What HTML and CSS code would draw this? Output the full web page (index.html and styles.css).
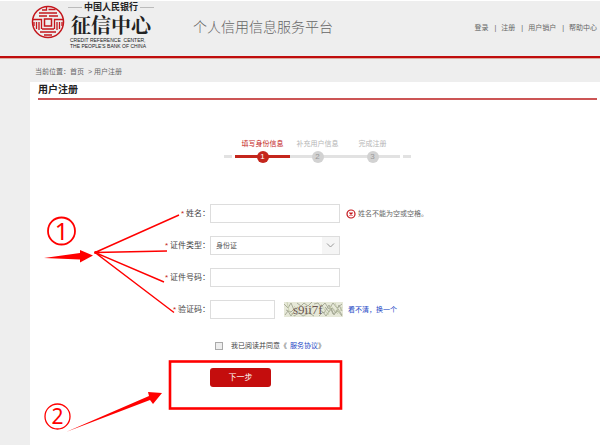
FILE: index.html
```html
<!DOCTYPE html>
<html lang="zh-CN">
<head>
    <meta charset="UTF-8">
    <meta name="viewport" content="width=device-width, initial-scale=1.0">
    <title>用户注册</title>
    <link rel="stylesheet" href="styles.css">
</head>
<body>
    <header class="header">
        <div class="logo">
            <svg class="logo-mark" viewBox="0 0 34 34" fill="none" stroke="#c4161c" stroke-width="1.3">
                <circle cx="17" cy="17" r="15.5" stroke-width="1.5"/>
                <rect x="13.500" y="14" width="7" height="7" stroke-width="1.5"/>
                <path d="M15.500 2v3H11M17.500 4.500h7M8 8h18M8 11h8M18 11h9"/>
                <path d="M2 14.500h8.500V24M8 17v8M5.500 17v7M3 17v4"/>
                <path d="M32 14.500h-8.500V24M26 17v8M28.500 17v7M31 17v4"/>
                <path d="M11 24h12M9 27h16M13 30h8"/>
            </svg>
            <div class="logo-text">
                <div class="logo-bank">中国人民银行</div>
                <div class="logo-name">征信中心</div>
                <div class="logo-en">CREDIT REFERENCE &nbsp;CENTER,<br>THE PEOPLE'S BANK OF CHINA</div>
            </div>
        </div>
        <div class="platform">个人信用信息服务平台</div>
        <nav class="top-nav">
            <a href="#">登录</a>
            <a href="#">注册</a>
            <a href="#">用户销户</a>
            <a href="#">帮助中心</a>
        </nav>
    </header>

    <div class="breadcrumb">当前位置：<a href="#">首页</a> &nbsp;&gt; 用户注册</div>

    <main class="panel">
        <h1 class="panel-title">用户注册</h1>

        <div class="steps">
            <span class="dash"></span>
            <ol class="step-list">
                <li class="step active">填写身份信息<span class="step-num">1</span></li>
                <li class="step">补充用户信息<span class="step-num">2</span></li>
                <li class="step">完成注册<span class="step-num">3</span></li>
            </ol>
            <span class="dash"></span>
        </div>

        <form class="form">
            <label class="label" for="name"><span class="required">*</span>姓名：</label>
            <div class="field">
                <input class="input" type="text" id="name">
                <span class="error">
                    <svg class="error-icon" viewBox="0 0 10 10" fill="none" stroke="#c4161c">
                        <circle cx="5" cy="5" r="4" stroke-width="1.2"/>
                        <path d="M3.500 3.500l3 3M6.500 3.500l-3 3" stroke-width="1.4"/>
                    </svg>
                    姓名不能为空或空格。
                </span>
            </div>

            <label class="label" for="idType"><span class="required">*</span>证件类型：</label>
            <div class="field">
                <div class="select-wrap">
                    <select class="input select" id="idType">
                        <option>身份证</option>
                    </select>
                    <svg class="select-arrow" viewBox="0 0 17 17" fill="none" stroke="#999">
                        <path d="M5 6.500l3.500 3.500L12 6.500"/>
                    </svg>
                </div>
            </div>

            <label class="label" for="idNumber"><span class="required">*</span>证件号码：</label>
            <div class="field">
                <input class="input" type="text" id="idNumber">
            </div>

            <label class="label" for="captcha"><span class="required">*</span>验证码：</label>
            <div class="field">
                <input class="input input-short" type="text" id="captcha">
                <svg class="captcha" viewBox="0 0 59 15">
                    <rect width="59" height="15" fill="#e6e8d8"/>
                    <g fill="none" stroke="#a3a692" stroke-width="0.9">
                        <path d="M0 2l4 4 3-5 3 7 4-3M1 13l3-4 3 5 4-6M13 1l4 3 3-3 4 3 4-4M10 14l5-3 4 3 6-3 5 3"/>
                        <path d="M30 2l4-1 3 4 4-4 4 6 4-6 4 5 5-4M35 14l4-4 3 4 5-8 3 7 4-6 4 6"/>
                        <path d="M41 5l4 5 3-4 4 5 3-8 3 6M2 8l5 2 3-3M36 8l4 3 5-8 4 9 5-3 4 5"/>
                    </g>
                    <g fill="none" stroke="#c4cbaa" stroke-width="0.8">
                        <path d="M3 0l2 9 5 5M20 4l5 8 4-9M37 2l7 11 3-9 7 8M51 1l4 10 3-6M10 4l7 8"/>
                    </g>
                    <text class="captcha-text" x="9" y="12">s9ii7f</text>
                </svg>
                <a class="link captcha-link" href="#">看不清，换一个</a>
            </div>

            <div class="agree">
                <input class="checkbox" type="checkbox" id="agree">
                <label for="agree">我已阅读并同意《</label>
                <a class="link" href="#">服务协议</a>》
            </div>

            <button class="next-btn" type="button">下一步</button>
        </form>
    </main>

    <!-- Guide marks drawn over the form -->
    <svg class="marks" viewBox="0 0 600 445" fill="none" stroke="#f00">
        <circle cx="61.500" cy="231" r="13.500" stroke-width="1.8"/>
        <circle cx="57.500" cy="416.500" r="12.500" stroke-width="1.3"/>
        <path d="M95 252.500L179 215M95 252.500l72-1.500M95 252.500l69 29.500M95 252.500l79 60" stroke-width="1.4"/>
        <path d="M44 258l36-5v-3l13 5.500-13 7v-3z" fill="#f00" stroke="none"/>
        <path d="M66 432l83-36-1-4 14 1-9 11-3-4z" fill="#f00" stroke="none"/>
        <rect x="170" y="361.500" width="171" height="47" stroke-width="2.600"/>
        <circle cx="95.500" cy="252.500" r="1.500" fill="#f00" stroke="none"/>
        <text class="mark-num" x="61.500" y="240">1</text>
        <text class="mark-num mark-num-small" x="57.500" y="424">2</text>
    </svg>
</body>
</html>
```

FILE: styles.css
```css
body {
    font-family: "Liberation Sans", "Noto Sans CJK SC", sans-serif;
    font-size: 7px;
    line-height: 10px;
    margin: 0;
    min-height: 100vh;
    display: flex;
    flex-direction: column;
    position: relative;
    background-color: #eee;
    color: #666;
}

a {
    color: inherit;
    text-decoration: none;
}

a:hover {
    text-decoration: underline;
}

.header {
    display: flex;
    align-items: flex-start;
    height: 55px;
    padding: 0 3px 0 31px;
    border-top: 1px solid #fff;
    border-bottom: 2px solid #c00d0d;
    box-shadow: 0 1px #dcaaa0;
}

.logo {
    display: flex;
    gap: 3px;
}

.logo-mark {
    width: 34px;
    height: 34px;
    margin-top: 4px;
}

.logo-text {
    width: 86px;
    padding-top: 1px;
    color: #222;
}

.logo-bank {
    display: flex;
    align-items: center;
    gap: 2px;
    font-size: 9px;
    font-weight: bold;
    line-height: 11px;
    white-space: nowrap;
}

.logo-bank::before,
.logo-bank::after {
    content: "";
    flex: 1;
    height: 1px;
    background-color: #bbb;
}

.logo-name {
    font-family: "Noto Serif CJK SC", "Noto Sans CJK SC", serif;
    font-size: 20px;
    font-weight: bold;
    line-height: 24px;
    text-align: center;
}

.logo-en {
    padding-left: 2px;
    font-size: 5px;
    line-height: 6px;
    white-space: nowrap;
}

.platform {
    margin: 16px 0 0 39px;
    font-size: 14px;
    font-weight: 300;
    line-height: 20px;
}

.top-nav {
    display: flex;
    margin: 22px 0 0 auto;
}

.top-nav a + a::before {
    content: "|";
    margin: 0 5px 0 6px;
}

.breadcrumb {
    padding: 9px 35px 5px;
}

.panel {
    flex: 1;
    margin-left: 30px;
    background-color: #fff;
}

.panel-title {
    margin: 0 3px 0 8px;
    font-size: 10px;
    line-height: 16px;
    color: #222;
    border-bottom: 2px solid #cc5555;
}

.steps {
    display: flex;
    align-items: flex-end;
    gap: 3px;
    margin: 39px 0 0 194px;
}

.dash {
    width: 8px;
    height: 3px;
    margin-bottom: 5px;
    background-color: #e2e2e2;
}

.step-list {
    display: flex;
    margin: 0;
    padding: 0;
    list-style: none;
}

.step {
    display: flex;
    flex-direction: column;
    align-items: center;
    gap: 2px;
    width: 55px;
    color: #b5b5b5;
    background: linear-gradient(#e2e2e2, #e2e2e2) 0 16px / 100% 3px no-repeat;
}

.step.active {
    color: #c4261c;
    background-image: linear-gradient(#c4261c, #c4261c);
}

.step-num {
    width: 12px;
    height: 12px;
    border-radius: 50%;
    background-color: #d2d2d2;
    color: #999;
    font-size: 8px;
    line-height: 12px;
    text-align: center;
}

.step.active .step-num {
    background-color: #c4261c;
    color: #fff;
}

.form {
    display: grid;
    grid-template-columns: 180px 1fr;
    grid-auto-rows: 19px;
    row-gap: 13px;
    align-items: center;
    padding-top: 41px;
}

.label {
    font-size: 8px;
    text-align: right;
    color: #444;
}

.required {
    margin-right: 2px;
    color: #c4261c;
}

.field {
    display: flex;
    align-items: center;
}

.input {
    box-sizing: border-box;
    width: 130px;
    height: 19px;
    padding: 0 5px;
    border: 1px solid #ddd;
    border-radius: 0;
    background-color: #fff;
    color: #555;
    font: inherit;
}

.input:focus {
    outline: none;
    border-color: #999;
}

.input-short {
    width: 65px;
}

.error {
    display: flex;
    align-items: center;
    gap: 2px;
    margin-left: 6px;
}

.error-icon {
    width: 10px;
    height: 10px;
}

.select-wrap {
    display: grid;
}

.select {
    grid-area: 1 / 1;
    appearance: none;
}

.select-arrow {
    grid-area: 1 / 1;
    place-self: center end;
    width: 17px;
    height: 17px;
    margin-right: 1px;
    background-color: #f5f5f5;
    pointer-events: none;
}

.captcha {
    width: 59px;
    height: 15px;
    margin: 0 5px 0 9px;
}

.captcha-text {
    font-family: "Liberation Serif", serif;
    font-size: 13px;
    fill: #6b5550;
}

.link {
    color: #2347c5;
}

.agree {
    grid-column: 2;
    display: flex;
    align-items: center;
    margin-top: 8px;
    padding-left: 5px;
    color: #444;
}

.agree .link {
    margin-left: 3px;
}

.checkbox {
    appearance: none;
    box-sizing: border-box;
    width: 8px;
    height: 8px;
    margin: 0 8px 0 0;
    border: 1px solid #aaa;
    background-color: #eee;
}

.checkbox:checked {
    background-color: #2347c5;
}

.next-btn {
    grid-column: 2;
    width: 61px;
    height: 19px;
    margin-top: 8px;
    padding: 0;
    border: none;
    border-radius: 3px;
    background-color: #c40d0d;
    color: #fff;
    font: inherit;
    font-size: 8px;
    cursor: pointer;
}

.next-btn:hover {
    background-color: #a80a0a;
}

.marks {
    position: absolute;
    top: 0;
    left: 0;
    width: 600px;
    height: 445px;
    pointer-events: none;
}

.mark-num {
    font-family: "Noto Sans", sans-serif;
    font-size: 24px;
    text-anchor: middle;
    fill: #f00;
    stroke: none;
}

.mark-num-small {
    font-size: 21px;
}
```
